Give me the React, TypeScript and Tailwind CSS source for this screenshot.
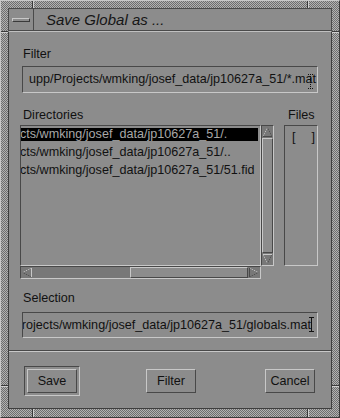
import React from "react"

// Motif-style "Save Global as ..." file selection dialog

const dirItems = [
  "cts/wmking/josef_data/jp10627a_51/.",
  "cts/wmking/josef_data/jp10627a_51/..",
  "cts/wmking/josef_data/jp10627a_51/51.fid",
]

function IBeam({ dotted }: { dotted?: boolean }) {
  return (
    <svg width="5" height="15" viewBox="0 0 5 15" className="block">
      <g stroke="#111" strokeWidth="1" strokeDasharray={dotted ? "1 1" : undefined}>
        <line x1="0" y1="0.5" x2="5" y2="0.5" />
        <line x1="2.5" y1="0" x2="2.5" y2="15" />
        <line x1="0" y1="14.5" x2="5" y2="14.5" />
      </g>
    </svg>
  )
}

function Arrow({ dir }: { dir: "up" | "down" | "left" | "right" }) {
  const light = "#c8c8c8"
  const dark = "#4a4a4a"
  if (dir === "up" || dir === "down") {
    const apex = dir === "up" ? 1.5 : 10.5
    const base = dir === "up" ? 10.5 : 1.5
    return (
      <svg width="11" height="12" viewBox="0 0 11 12" className="block">
        <line x1="5.5" y1={apex} x2="1" y2={base} stroke={light} strokeDasharray="1 1" />
        <line x1="5.5" y1={apex} x2="10" y2={base} stroke={dark} strokeDasharray="1 1" />
        <line x1="1" y1={base} x2="10" y2={base} stroke={dir === "up" ? dark : light} />
      </svg>
    )
  }
  const apex = dir === "left" ? 1.5 : 10.5
  const base = dir === "left" ? 10.5 : 1.5
  return (
    <svg width="12" height="11" viewBox="0 0 12 11" className="block">
      <line x1={apex} y1="5.5" x2={base} y2="1" stroke={light} strokeDasharray="1 1" />
      <line x1={apex} y1="5.5" x2={base} y2="10" stroke={dark} strokeDasharray="1 1" />
      <line x1={base} y1="1" x2={base} y2="10" stroke={dir === "left" ? light : dark} />
    </svg>
  )
}

function Button({ label }: { label: string }) {
  return (
    <div className="w-[50px] h-[24px] flex items-center justify-center border border-t-[#c8c8c8] border-l-[#c8c8c8] border-r-[#484848] border-b-[#484848] bg-[#8c8c8c] text-[12.6px] text-[#111]">
      {label}
    </div>
  )
}

export default function App() {
  return (
    <div className="relative w-[340px] h-[418px] flex flex-col pt-[7px] px-[7px] pb-[8px] bg-[repeating-conic-gradient(#b2b2b2_0%_25%,#6e6e6e_0%_50%)] bg-[length:2px_2px] border border-t-[#c8c8c8] border-l-[#c8c8c8] border-r-[#3a3a3a] border-b-[#3a3a3a] font-['Liberation_Sans',Arial,sans-serif] text-[#111]">
      {/* frame handle notches */}
      <div className="absolute top-0 left-[31px] w-[2px] h-[7px] border-l border-l-[#3a3a3a] border-r border-r-[#cfcfcf]" />
      <div className="absolute top-0 left-[306px] w-[2px] h-[7px] border-l border-l-[#3a3a3a] border-r border-r-[#cfcfcf]" />
      <div className="absolute bottom-0 left-[31px] w-[2px] h-[8px] border-l border-l-[#3a3a3a] border-r border-r-[#cfcfcf]" />
      <div className="absolute bottom-0 left-[306px] w-[2px] h-[8px] border-l border-l-[#3a3a3a] border-r border-r-[#cfcfcf]" />
      <div className="absolute left-0 top-[30px] w-[7px] h-[2px] border-t border-t-[#3a3a3a] border-b border-b-[#cfcfcf]" />
      <div className="absolute right-0 top-[30px] w-[7px] h-[2px] border-t border-t-[#3a3a3a] border-b border-b-[#cfcfcf]" />
      <div className="absolute left-0 top-[384px] w-[7px] h-[2px] border-t border-t-[#3a3a3a] border-b border-b-[#cfcfcf]" />
      <div className="absolute right-0 top-[384px] w-[7px] h-[2px] border-t border-t-[#3a3a3a] border-b border-b-[#cfcfcf]" />

      {/* title bar */}
      <div className="h-[23px] flex bg-[#8c8c8c] border border-[#4a4a4a]">
        <div className="w-[25px] flex items-center justify-center border-r border-r-[#4a4a4a]">
          <div className="w-[18px] h-[4px] border border-t-[#c8c8c8] border-l-[#c8c8c8] border-r-[#3a3a3a] border-b-[#3a3a3a]" />
        </div>
        <div className="pl-[12px] flex items-center italic text-[15px] leading-none text-[#161616]">
          Save Global as ...
        </div>
      </div>

      {/* dialog body */}
      <div className="flex-1 flex flex-col bg-[#8c8c8c] border border-[#3e3e3e] border-t-[#c0c0c0] px-[13px] text-[12.6px]">
        <div className="mt-[15px] h-[14px] leading-[14px] pl-[1px]">Filter</div>
        <div className="relative mt-[5px] h-[27px] flex items-center overflow-hidden whitespace-nowrap border border-t-[#484848] border-l-[#484848] border-r-[#c8c8c8] border-b-[#c8c8c8] pl-[6px]">
          upp/Projects/wmking/josef_data/jp10627a_51/*.mat
          <div className="absolute right-[4px] top-[7px]">
            <IBeam dotted />
          </div>
        </div>

        <div className="mt-[15px] h-[14px] leading-[14px] flex">
          <span className="w-[266px] pl-[1px]">Directories</span>
          <span>Files</span>
        </div>

        <div className="mt-[3px] -ml-[2px] flex">
          <div className="flex flex-col w-[254px]">
            <div className="flex">
              <div className="w-[241px] h-[141px] overflow-hidden whitespace-nowrap border border-t-[#484848] border-l-[#484848] border-r-[#c8c8c8] border-b-[#c8c8c8] pt-[2px] pr-[2px]">
                {dirItems.map((item, i) => (
                  <div
                    key={item}
                    className={`h-[13px] leading-[13px] mb-[5px] ${
                      i === 0 ? "bg-black text-[#a8a8a8]" : ""
                    }`}
                  >
                    <span className="-ml-[1px]">{item}</span>
                  </div>
                ))}
              </div>
              <div className="w-[13px] h-[141px] flex flex-col bg-[#787878] border border-t-[#484848] border-l-[#484848] border-r-[#c8c8c8] border-b-[#c8c8c8]">
                <Arrow dir="up" />
                <div className="flex-1 bg-[#8c8c8c] border border-t-[#c8c8c8] border-l-[#c8c8c8] border-r-[#484848] border-b-[#484848]" />
                <Arrow dir="down" />
              </div>
            </div>
            <div className="w-[241px] h-[13px] flex bg-[#787878] border border-t-[#484848] border-l-[#484848] border-r-[#c8c8c8] border-b-[#c8c8c8]">
              <Arrow dir="left" />
              <div className="flex-1" />
              <div className="w-[118px] bg-[#8c8c8c] border border-t-[#c8c8c8] border-l-[#c8c8c8] border-r-[#484848] border-b-[#484848]" />
              <Arrow dir="right" />
            </div>
          </div>
          <div className="ml-[10px] w-[37px] h-[141px] border border-t-[#484848] border-l-[#484848] border-r-[#c8c8c8] border-b-[#c8c8c8] pt-[4px] pl-[7px] flex gap-[16px] leading-[14px]">
            <span>[</span>
            <span>]</span>
          </div>
        </div>

        <div className="mt-[12px] h-[14px] leading-[14px] pl-[1px]">Selection</div>
        <div className="relative mt-[7px] h-[26px] flex items-center justify-end overflow-hidden whitespace-nowrap border border-t-[#484848] border-l-[#484848] border-r-[#c8c8c8] border-b-[#c8c8c8] pr-[6px]">
          Projects/wmking/josef_data/jp10627a_51/globals.mat
          <div className="absolute right-[3px] top-[4px]">
            <IBeam />
          </div>
        </div>

        <div className="mt-[12px] -mx-[13px] h-[2px] border-t border-t-[#484848] border-b border-b-[#c8c8c8]" />

        <div className="mt-[14px] flex items-start">
          <div className="ml-[2px] w-[56px] h-[30px] p-[2px] border border-t-[#484848] border-l-[#484848] border-r-[#c8c8c8] border-b-[#c8c8c8]">
            <Button label="Save" />
          </div>
          <div className="ml-[66px] mt-[3px]">
            <Button label="Filter" />
          </div>
          <div className="ml-[69px] mt-[3px]">
            <Button label="Cancel" />
          </div>
        </div>
      </div>
    </div>
  )
}
